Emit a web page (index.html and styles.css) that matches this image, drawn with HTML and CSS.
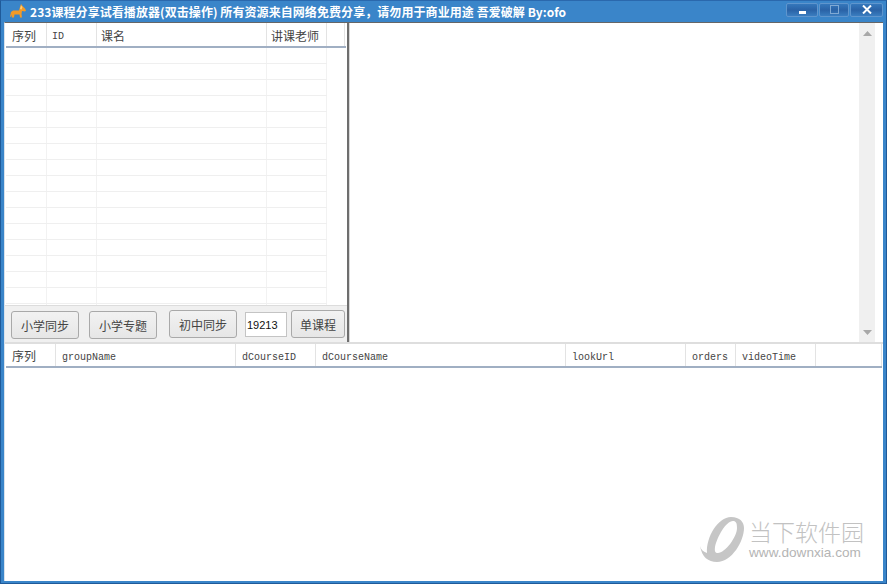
FILE: index.html
```html
<!DOCTYPE html>
<html lang="zh">
<head>
<meta charset="utf-8">
<title>233课程分享试看播放器</title>
<link rel="stylesheet" href="styles.css">
</head>
<body>
<div class="window">
  <header class="titlebar">
    <svg class="app-icon" width="16" height="14" viewBox="0 0 16 14"><path d="M0 12.500L1 8l2-1.500h6L10 3l1-3 1.500 2L15 4.500 16 6.500l-1 1-3-.5-.5 3 .5 3.500h-2L9.500 10.500H4.500L4 13.500H1.800L2 10.500 1 13z" fill="#f39a26"/><path d="M11 1.500l1.500 1.500-1 2.500-1.500-.5z" fill="#ffcf7a"/></svg>
    <div class="title">233课程分享试看播放器(双击操作) 所有资源来自网络免费分享，请勿用于商业用途 吾爱破解 By:ofo</div>
    <div class="controls">
      <button class="ctl ctl-min"><svg class="min-glyph" width="7" height="3" viewBox="0 0 7 3"><rect width="7" height="3" fill="#fff"/></svg></button>
      <button class="ctl ctl-max"><svg width="9" height="9" viewBox="0 0 9 9"><rect x=".5" y=".5" width="8" height="8" fill="none" stroke="#7fa9d4"/></svg></button>
      <button class="ctl ctl-close"><svg width="10" height="9" viewBox="0 0 10 9"><path d="M1 .5l8 8M9 .5l-8 8" stroke="#fff" stroke-width="2"/></svg></button>
    </div>
  </header>
  <main class="client">
    <section class="top">
      <div class="left">
        <div class="list">
          <div class="thead">
            <div class="th cjk w-seq">序列</div>
            <div class="th mono w-id">ID</div>
            <div class="th cjk w-name">课名</div>
            <div class="th cjk w-teacher">讲课老师</div>
            <div class="th w-end"></div>
          </div>
          <div class="grid-body"></div>
        </div>
        <div class="toolbar">
          <button class="btn b-low">小学同步</button>
          <button class="btn b-low b-gap">小学专题</button>
          <button class="btn b-high b-gap2">初中同步</button>
          <input class="field" value="19213">
          <button class="btn b-high b-single">单课程</button>
        </div>
      </div>
      <div class="splitter"></div>
      <div class="right">
        <div class="text-area"></div>
        <div class="scrollbar">
          <svg width="9" height="5" viewBox="0 0 9 5"><path d="M4.500 0L9 5H0z" fill="#a8a8a8"/></svg>
          <svg width="9" height="5" viewBox="0 0 9 5"><path d="M4.500 5L9 0H0z" fill="#a8a8a8"/></svg>
        </div>
      </div>
    </section>
    <section class="bottom">
      <div class="thead thead2">
        <div class="th cjk b-seq">序列</div>
        <div class="th mono b-group">groupName</div>
        <div class="th mono b-id">dCourseID</div>
        <div class="th mono b-name">dCourseName</div>
        <div class="th mono b-url">lookUrl</div>
        <div class="th mono b-orders">orders</div>
        <div class="th mono b-time">videoTime</div>
        <div class="th b-fill"></div>
      </div>
    </section>
    <div class="watermark">
      <svg class="wm-logo" width="44" height="46" viewBox="0 0 44 46"><path fill-rule="evenodd" d="M31 0C40 0 44 5 44 11 44 24 32 45 17 45 8 45 2 40 0 29 1 33 4 35 7 36 6 20 18 0 31 0zM33 4C26 4 17 20 15 30 14.500 34 15 36 18 36 25 36 37 20 37 11 37 6 36 4 33 4z" fill="#c6c6c6"/></svg>
      <div class="wm-text">
        <div class="wm-cn">当下软件园</div>
        <div class="wm-url">www.downxia.com</div>
      </div>
    </div>
  </main>
</div>
</body>
</html>
```
FILE: styles.css
```css
* { box-sizing: border-box; }
html, body { margin: 0; height: 100%; overflow: hidden; }
body { font-family: "Noto Sans CJK SC", "Liberation Sans", sans-serif; }
.window {
  width: 887px; height: 584px; background: #3a85c9;
  border: 1px solid #1f5a99; border-top-color: #2a68ad;
  display: flex; flex-direction: column; padding: 0 3px 2px 3px;
}
.titlebar { height: 21px; flex: none; display: flex; align-items: center; }
.app-icon { margin-left: 6px; flex: none; margin-top: -1px; }
.title {
  margin-left: 4px; color: #fff; font: bold 12px/16px "Noto Sans CJK SC", "Liberation Sans", sans-serif;
  white-space: nowrap; flex: 1; letter-spacing: .07px;
}
.controls { display: flex; margin: -4px 0 0 0; flex: none; gap: 1px; }
.ctl {
  height: 14px; padding: 0; display: flex; align-items: center; justify-content: center;
  background: linear-gradient(#3577bb, #2a62a6 50%, #3a7dc0);
  border: 1px solid #5f95cd; border-radius: 2px;
}
.ctl-min { width: 32px; }
.ctl-max { width: 30px; }
.ctl-close { width: 33px; }
.min-glyph { margin-top: 5px; }
.client {
  flex: 1; background: #fff; display: flex; flex-direction: column; position: relative;
  border-top: 1px solid #666; border-left: 1px solid #d8e2ec;
}
.top { height: 319px; flex: none; display: flex; }
.left { width: 342px; flex: none; display: flex; flex-direction: column; background: #f0f0f0; }
.list { height: 283px; flex: none; background: #fff; border-bottom: 1px solid #dcdcdc; display: flex; flex-direction: column; padding: 0 1px; }
.thead { display: flex; height: 25px; flex: none; border-bottom: 2px solid #a0afc3; background: #fff; }
.th {
  height: 100%; border-right: 1px solid #e3e3e3; padding-left: 6px; color: #444;
  white-space: nowrap; overflow: hidden; line-height: 26px;
}
.cjk { font-size: 12px; font-family: "Noto Sans CJK SC", sans-serif; }
.mono { font-size: 10px; font-family: "Liberation Mono", monospace; }
.thead .mono { line-height: 27px; }
.w-seq { width: 41px; }
.w-id { width: 50px; padding-left: 5px; }
.w-name { width: 170px; padding-left: 4px; }
.w-teacher { width: 60px; padding-left: 4px; }
.w-end { width: 18px; }
.grid-body {
  flex: 1;
  background-image:
    linear-gradient(transparent 15px, #efefef 15px),
    linear-gradient(#f2f2f2, #f2f2f2),
    linear-gradient(#f2f2f2, #f2f2f2),
    linear-gradient(#f2f2f2, #f2f2f2),
    linear-gradient(#f2f2f2, #f2f2f2);
  background-size: 321px 16px, 1px 100%, 1px 100%, 1px 100%, 1px 100%;
  background-position: 0 0, 40px 0, 90px 0, 260px 0, 320px 0;
  background-repeat: repeat-y, no-repeat, no-repeat, no-repeat, no-repeat;
}
.toolbar { flex: 1; display: flex; align-items: flex-start; padding: 4px 0 0 6px; }
.btn {
  height: 28px; width: 68px; flex: none; padding: 0; color: #444;
  font: 12px "Noto Sans CJK SC", sans-serif;
  background: linear-gradient(#f2f2f2, #e6e6e6);
  border: 1px solid #a9a9a9; border-radius: 3px;
}
.b-low { margin-top: 1px; }
.b-gap { margin-left: 10px; }
.b-gap2 { margin-left: 12px; }
.field {
  width: 42px; height: 25px; margin: 2px 0 0 8px; padding: 0 1px; flex: none;
  border: 1px solid #c4c4c4; background: #fff; color: #111;
  font: 11px "Liberation Sans", sans-serif; outline: none;
}
.b-single { width: 54px; margin-left: 4px; }
.splitter { width: 3px; flex: none; background: linear-gradient(90deg, #6e6e6e 0, #6e6e6e 2px, #d8d8d8 2px); }
.right { flex: 1; display: flex; min-width: 0; }
.text-area { flex: 1; background: #fff; }
.scrollbar {
  width: 16px; margin-right: 8px; background: #f0f0f0; flex: none;
  display: flex; flex-direction: column; justify-content: space-between; align-items: center;
  padding: 8px 0 7px;
}
.bottom { flex: 1; display: flex; flex-direction: column; border-top: 2px solid #dedede; }
.thead2 { height: 24px; margin: 0 1px 0 1px; }
.thead2 .cjk { line-height: 24px; }
.b-seq { width: 50px; }
.b-group { width: 180px; }
.b-id { width: 80px; }
.b-name { width: 250px; }
.b-url { width: 120px; }
.b-orders { width: 50px; }
.b-time { width: 80px; }
.b-fill { flex: 1; }
.watermark { position: absolute; right: 19px; bottom: 18px; display: flex; gap: 5px; align-items: center; }
.wm-text { display: flex; flex-direction: column; margin-top: -3px; }
.wm-cn { font: 300 23px/29px "Noto Sans CJK SC", sans-serif; color: #c2c2c2; white-space: nowrap; }
.wm-url { font: 13.6px/14px "Liberation Sans", sans-serif; color: #b4b4b4; white-space: nowrap; }
```
